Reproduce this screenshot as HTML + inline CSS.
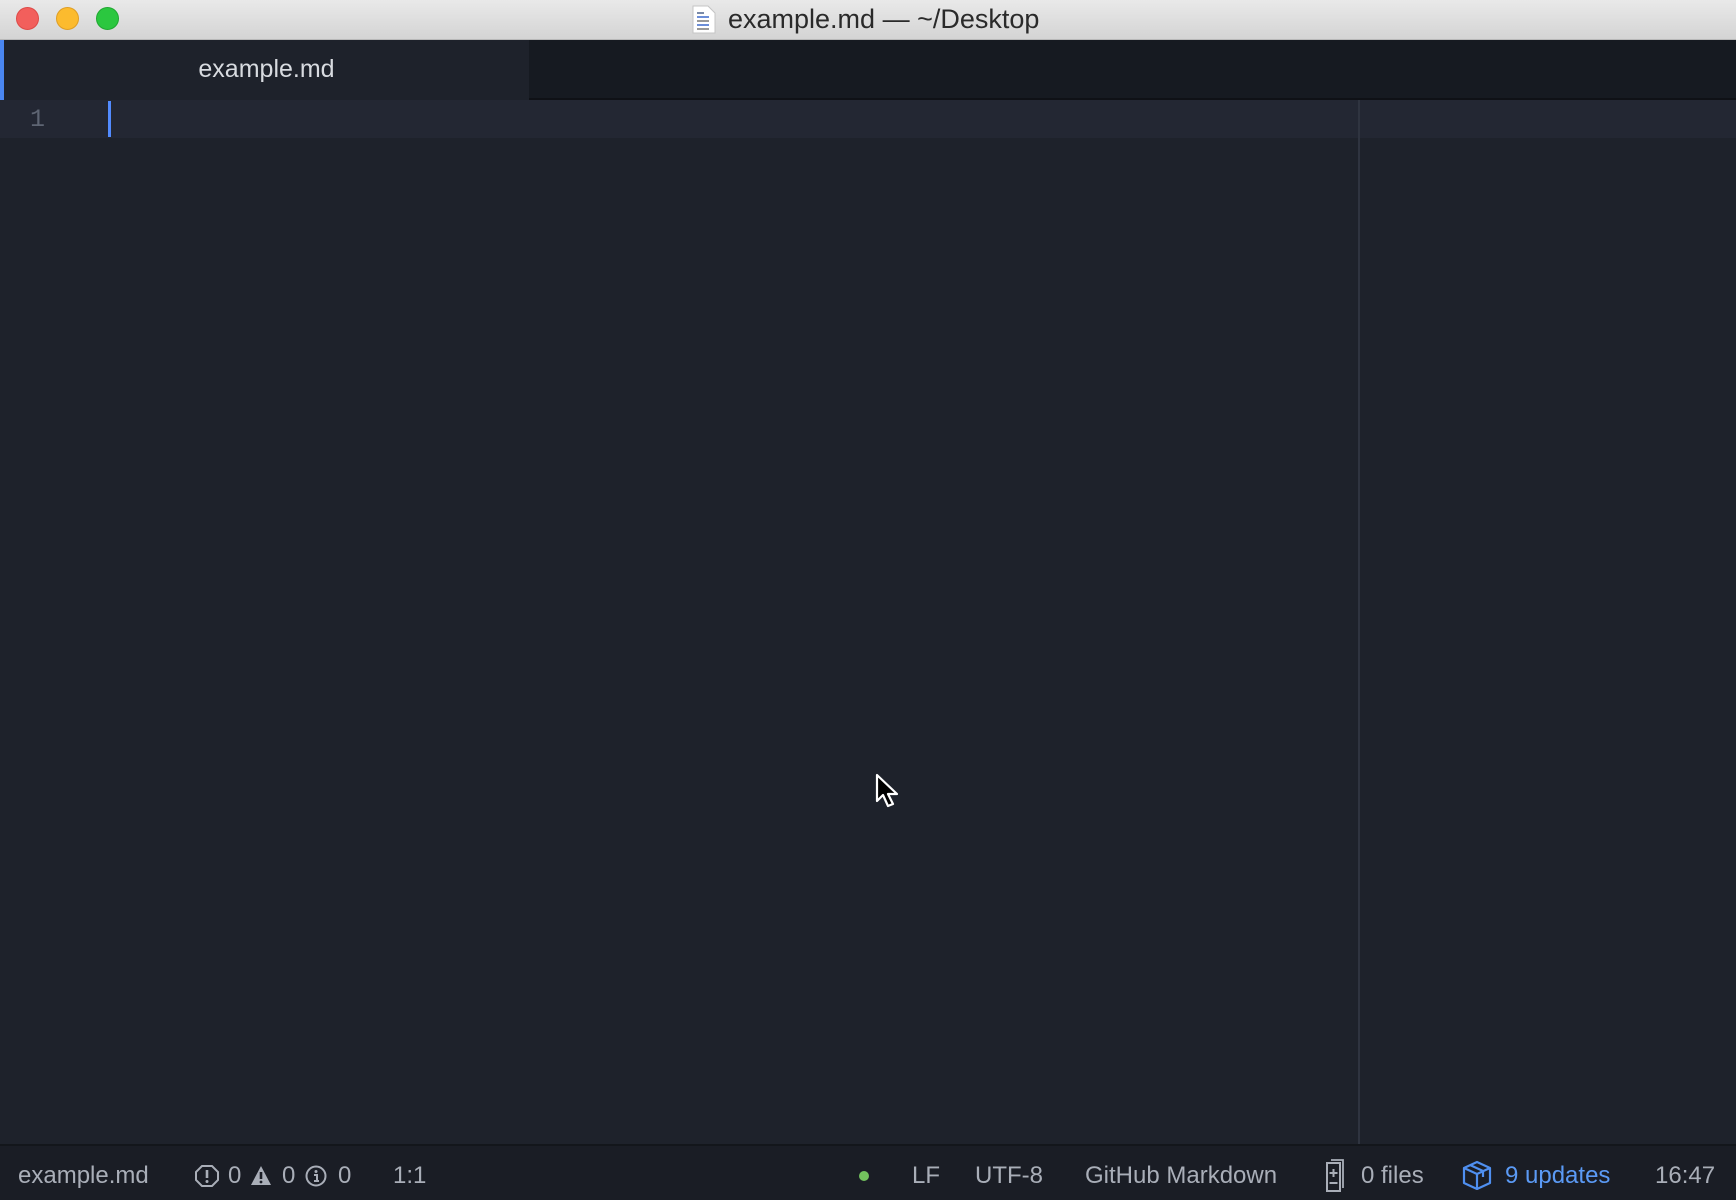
<!DOCTYPE html>
<html><head><meta charset="utf-8"><style>
*{margin:0;padding:0;box-sizing:border-box}
html,body{width:1736px;height:1200px;overflow:hidden;background:#1e222b;font-family:"Liberation Sans",sans-serif}
.title{position:absolute;left:0;top:0;width:1736px;height:40px;background:linear-gradient(#e9e9e9,#d4d4d4);border-bottom:1px solid #b8b8b8}
.dot{position:absolute;top:7px;width:23px;height:23px;border-radius:50%}
.ttext{position:absolute;left:728px;top:4px;font-size:27px;color:#2a2a2a;white-space:nowrap}
.tabbar{position:absolute;left:0;top:40px;width:1736px;height:60px;background:#161a21;border-bottom:2px solid #0f1116}
.tab{position:absolute;left:0;top:0;width:529px;height:60px;background:#1e222b;border-left:4px solid #4a86f0}
.tab span{position:absolute;left:0;width:525px;text-align:center;top:15px;font-size:25px;color:#d8dbe0}
.line{position:absolute;left:0;top:100px;width:1736px;height:38px;background:#232733}
.ln{position:absolute;left:30px;top:105px;font-size:25px;color:#5e6573;font-family:"Liberation Mono",monospace}
.cursor{position:absolute;left:108px;top:101px;width:3px;height:36px;background:#528bff}
.guide{position:absolute;left:1358px;top:100px;width:2px;height:1044px;background:#2f3440}
.status{position:absolute;left:0;top:1144px;width:1736px;height:56px;background:#1a1d25;border-top:2px solid #13161b;font-size:24px;color:#a9aeb8}
.status span,.status svg{position:absolute}
.status span{top:16px;white-space:nowrap}
</style></head><body>
<div class="title">
<div class="dot" style="left:16px;background:#f25f5c;border:1px solid #de4a47"></div>
<div class="dot" style="left:56px;background:#fcbb2e;border:1px solid #df9e24"></div>
<div class="dot" style="left:96px;background:#2bc73f;border:1px solid #20a831"></div>
<svg style="position:absolute;left:692px;top:5px" width="24" height="29"><path d="M1 1h15l7 7v20H1z" fill="#fff" stroke="#c4c4c4"/><g stroke-width="2"><path d="M5 8h7" stroke="#7a8aa8"/><path d="M5 12h12" stroke="#6c8ed8"/><path d="M5 16h12" stroke="#999"/><path d="M5 20h12" stroke="#6c8ed8"/><path d="M5 24h12" stroke="#999"/></g></svg>
<div class="ttext">example.md — ~/Desktop</div>
</div>
<div class="tabbar"><div class="tab"><span>example.md</span></div></div>
<div class="line"></div>
<div class="ln">1</div>
<div class="cursor"></div>
<div class="guide"></div>
<svg style="position:absolute;left:875px;top:773px" width="30" height="40"><path d="M2 2v26l6-6 5 11 5-2-5-10h9z" fill="#000" stroke="#fff" stroke-width="2.2" stroke-linejoin="round"/></svg>
<div class="status">
<span style="left:18px">example.md</span>
<svg style="left:195px;top:19px" width="24" height="22"><path d="M7 1h10l6 6v8l-6 6H7l-6-6V7z" fill="none" stroke="#a9aeb8" stroke-width="2"/><path d="M12 5v8" stroke="#a9aeb8" stroke-width="2.6"/><circle cx="12" cy="16.5" r="1.5" fill="#a9aeb8"/></svg>
<span style="left:228px">0</span>
<svg style="left:250px;top:19px" width="22" height="21"><path d="M11 1L21 20H1z" fill="#a9aeb8"/><path d="M11 7v7" stroke="#1a1d25" stroke-width="2.6"/><circle cx="11" cy="17" r="1.4" fill="#1a1d25"/></svg>
<span style="left:282px">0</span>
<svg style="left:305px;top:19px" width="22" height="22"><circle cx="11" cy="11" r="9.5" fill="none" stroke="#a9aeb8" stroke-width="2"/><circle cx="11" cy="6.5" r="1.5" fill="#a9aeb8"/><path d="M9 10h3v6M9 16h5" stroke="#a9aeb8" stroke-width="2" fill="none"/></svg>
<span style="left:338px">0</span>
<span style="left:393px">1:1</span>
<svg style="left:858px;top:24px" width="12" height="12"><circle cx="6" cy="6" r="5" fill="#73c25e"/></svg>
<span style="left:912px">LF</span>
<span style="left:975px">UTF-8</span>
<span style="left:1085px">GitHub Markdown</span>
<svg style="left:1322px;top:13px" width="26" height="34"><path d="M9 1h12v28" fill="none" stroke="#a9aeb8" stroke-width="1.8"/><path d="M5 4h13v28H5z" fill="none" stroke="#a9aeb8" stroke-width="2"/><path d="M11.5 10v8M7.5 14h8M7.5 24h8" stroke="#a9aeb8" stroke-width="2"/></svg>
<span style="left:1361px">0 files</span>
<svg style="left:1461px;top:14px" width="32" height="30"><path d="M3 8l13-6 13 6v15l-13 6-13-6z M3 8l13 6 13-6 M16 14v15 M9 5l13 6v6" fill="none" stroke="#4f8ff0" stroke-width="2.2" stroke-linejoin="round"/></svg>
<span style="left:1505px;color:#5b9af5">9 updates</span>
<span style="left:1655px">16:47</span>
</div>
</body></html>
